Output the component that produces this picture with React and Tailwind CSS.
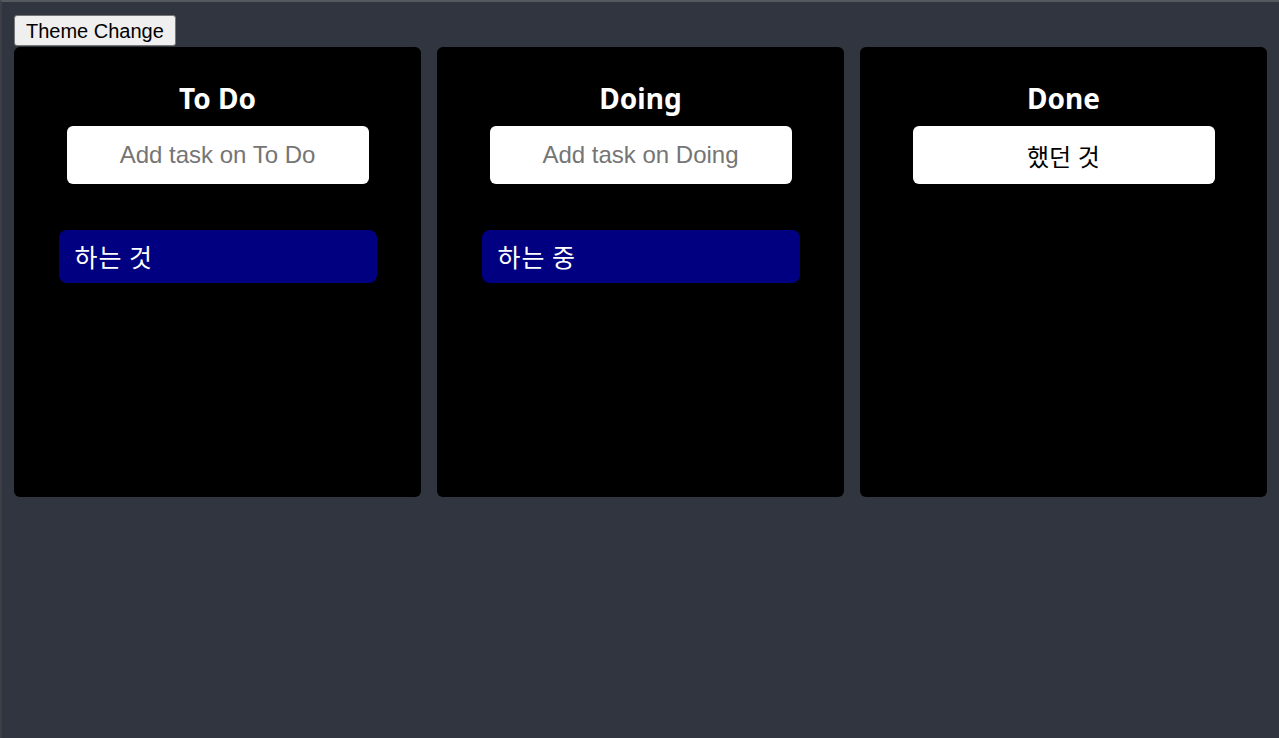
import React from "react";

const columns = [
  { title: "To Do", placeholder: "Add task on To Do", value: "", tasks: ["하는 것"] },
  { title: "Doing", placeholder: "Add task on Doing", value: "", tasks: ["하는 중"] },
  { title: "Done", placeholder: "Add task on Done", value: "했던 것", tasks: [] },
];

export default function App() {
  return (
    <div className="min-h-screen w-full bg-[#30353f] border-t-2 border-t-[#555a60] border-l-2 border-l-[#3c3f44] pl-[12px] pr-[12px] pt-[13px]">
      <button className="h-[31px] px-[11px] pt-[1px] bg-[#efefef] border border-[#767676] rounded-[3px] text-[20px] text-black leading-[23px] font-['Liberation_Sans',Arial,sans-serif]">
        Theme Change
      </button>
      <div className="grid grid-cols-3 gap-[16px] mt-[1px]">
        {columns.map((col) => (
          <div key={col.title} className="h-[450px] bg-black rounded-[6px] flex flex-col items-center pt-[31px]">
            <h2 className="h-[40px] leading-[40px] text-[28px] font-bold text-white font-['Noto_Sans','Open_Sans',sans-serif]">
              {col.title}
            </h2>
            <input
              className="mt-[8px] w-[302px] h-[58px] bg-white rounded-[6px] text-center text-[24px] text-black placeholder:text-[#757575] outline-none font-['Liberation_Sans',Arial,'Noto_Sans_CJK_KR',sans-serif]"
              placeholder={col.placeholder}
              defaultValue={col.value}
            />
            {col.tasks.map((t) => (
              <div
                key={t}
                className="mt-[46px] w-[318px] h-[53px] bg-[#000080] rounded-[8px] pl-[16px] flex items-center text-white text-[25px] tracking-[1px] font-['Noto_Sans_CJK_KR','Noto_Sans',sans-serif]"
              >
                {t}
              </div>
            ))}
          </div>
        ))}
      </div>
    </div>
  );
}
